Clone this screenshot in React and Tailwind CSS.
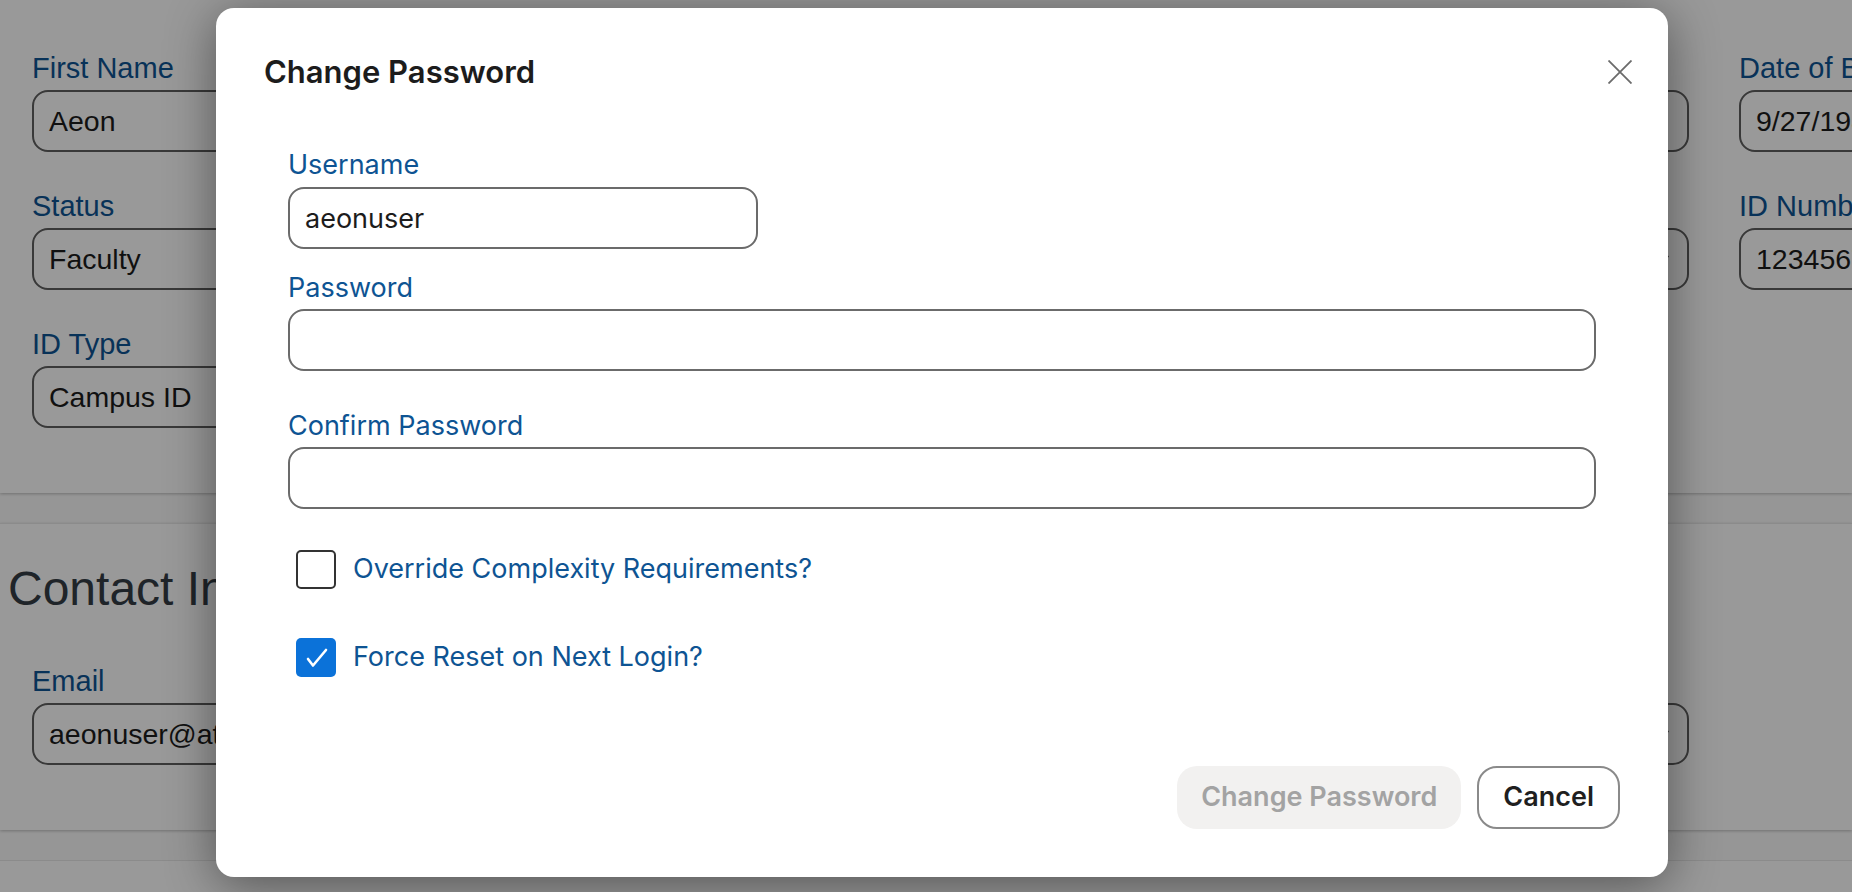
import { ChevronDown } from 'lucide-react';

const bgRows = [
  [
    { label: 'First Name', value: 'Aeon' },
    { label: 'Middle Name', value: '' },
    { label: 'Last Name', value: 'User' },
    { label: 'Date of Birth', value: '9/27/1985' },
  ],
  [
    { label: 'Status', value: 'Faculty', select: true },
    { label: 'Department', value: 'Library' },
    { label: 'Organization', value: 'Main', select: true },
    { label: 'ID Number', value: '123456789' },
  ],
  [{ label: 'ID Type', value: 'Campus ID', select: true }],
];

function BgField({ label, value, select }) {
  return (
    <div>
      <div className="h-[32px] leading-[32px] text-[29px] text-[#0e5493]">{label}</div>
      <div className="mt-[6px] h-[62px] rounded-[16px] border-2 border-[#5f5f5f] bg-white flex items-center justify-between pl-[15px] pr-[14px] text-[28.5px] text-[#1c1c1c]">
        <span>{value}</span>
        {select && <ChevronDown className="w-5 h-5 text-[#444]" strokeWidth={2} />}
      </div>
    </div>
  );
}

function Field({ label, value, narrow, gap = 'mt-[5px]' }) {
  return (
    <div>
      <div className="h-[32px] leading-[32px] text-[27px] text-[#0e5493]">{label}</div>
      <input
        defaultValue={value}
        className={`${gap} block h-[62px] rounded-[16px] border-2 border-[#6b6b6b] bg-white pl-[15px] text-[27px] text-[#1c1c1c] outline-none ${narrow ? 'w-[470px]' : 'w-full'}`}
      />
    </div>
  );
}

function Checkbox({ checked, label }) {
  return (
    <div className="h-[39px] flex items-center">
      <div
        className={`ml-2 w-[40px] h-[39px] rounded-[5px] flex items-center justify-center ${checked ? 'bg-[#0b72d9]' : 'border-2 border-[#333] bg-white'}`}
      >
        {checked && (
          <svg width="40" height="39" viewBox="0 0 40 39" fill="none">
            <path d="M12 21 L17 27.5 L30 12" stroke="white" strokeWidth="2.6" strokeLinecap="round" strokeLinejoin="round" />
          </svg>
        )}
      </div>
      <span className="ml-[17px] text-[27px] text-[#0e5493]">{label}</span>
    </div>
  );
}

export default function App() {
  return (
    <div className="relative w-[1852px] h-[892px] overflow-hidden bg-[#fbfbfb] font-['Liberation_Sans',sans-serif]">
      {/* page behind the dialog */}
      <div className="bg-white pt-[52px] pb-[65px] pl-[32px] shadow-[0_1px_3px_rgba(0,0,0,0.25)]">
        <div className="grid grid-cols-[519px_519px_519px_519px] gap-x-[50px] gap-y-[38px]">
          {bgRows.map((row, i) =>
            row.map((f, j) => <BgField key={`${i}-${j}`} {...f} />)
          )}
        </div>
      </div>

      <div className="mt-[30px] bg-white border-t border-[#e8e8e8] pt-[37px] pb-[65px] shadow-[0_1px_3px_rgba(0,0,0,0.25)]">
        <h2 className="pl-[8px] h-[56px] leading-[56px] text-[48px] text-[#353c45]">Contact Information</h2>
        <div className="mt-[48px] pl-[32px] grid grid-cols-[519px_519px_519px_519px] gap-x-[50px]">
          <BgField label="Email" value="aeonuser@atlas-sys.com" />
          <BgField label="Phone" value="" />
          <BgField label="Preferred Contact" value="Email" select />
        </div>
      </div>

      <div className="mt-[30px] h-[200px] bg-white border-t border-[#e8e8e8]" />

      {/* overlay */}
      <div className="absolute inset-0 bg-black/40" />

      {/* dialog */}
      <div className="absolute left-[216px] top-[8px] w-[1452px] rounded-[18px] bg-white px-12 pt-[46px] pb-12 shadow-[0_8px_50px_rgba(0,0,0,0.45)] font-['Inter',sans-serif]">
        <div className="flex items-center justify-between h-[36px]">
          <h1 className="text-[31px] leading-[36px] font-semibold text-[#1c1c1c]">Change Password</h1>
          <button className="-mr-3 w-6 h-6 flex items-center justify-center">
            <svg width="24" height="24" viewBox="0 0 24 24" fill="none">
              <path d="M0.5 0.5 L23.5 23.5 M23.5 0.5 L0.5 23.5" stroke="#6b6b6b" strokeWidth="1.8" />
            </svg>
          </button>
        </div>

        <div className="px-6 mt-[59px]">
          <Field label="Username" value="aeonuser" narrow gap="mt-[6px]" />
          <div className="mt-[23px]">
            <Field label="Password" value="" />
          </div>
          <div className="mt-[39px]">
            <Field label="Confirm Password" value="" />
          </div>
          <div className="mt-[41px]">
            <Checkbox label="Override Complexity Requirements?" />
          </div>
          <div className="mt-[49px]">
            <Checkbox checked label="Force Reset on Next Login?" />
          </div>
        </div>

        <div className="mt-[89px] flex justify-end gap-4">
          <button className="h-[63px] px-6 rounded-[20px] bg-[#f2f1f0] text-[27px] font-semibold text-[#a3a3a3]">
            Change Password
          </button>
          <button className="h-[63px] px-6 rounded-[20px] border-2 border-[#8a8a8a] bg-white text-[27px] font-semibold text-[#1f1f1f]">
            Cancel
          </button>
        </div>
      </div>
    </div>
  );
}
